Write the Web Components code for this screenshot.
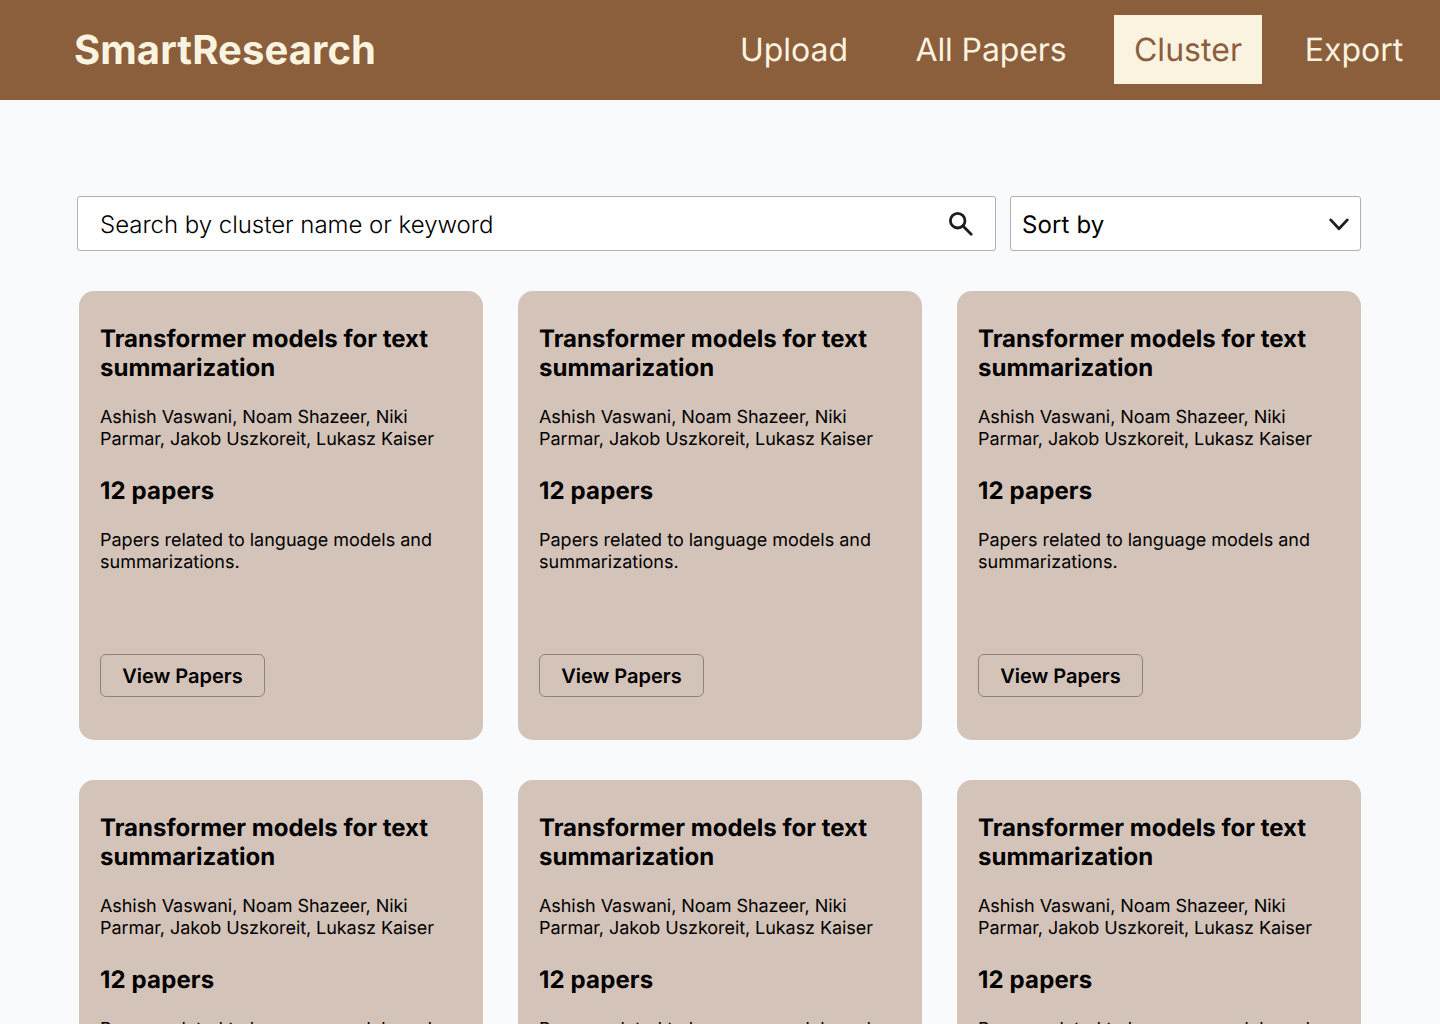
<!DOCTYPE html>
<html lang="en"><head><meta charset="utf-8"><title>SmartResearch</title>
<style>html,body{margin:0;height:1024px;overflow:hidden;background:#f9fafc;font-family:Inter,sans-serif;color:#000;text-rendering:geometricPrecision}</style></head>
<body><cluster-page></cluster-page>
<script>
function define(name, html){
  const t=document.createElement('template');t.innerHTML=html;
  customElements.define(name,class extends HTMLElement{
    constructor(){super();this.attachShadow({mode:'open'}).append(t.content.cloneNode(true));}
  });
}
define('nav-item',`<style>:host{display:flex;align-items:center;justify-content:center;height:69px;box-sizing:border-box;font-size:32px;line-height:39px;color:#faf3e0;white-space:nowrap;font-weight:400}
:host([active]){background:#faf3e0;color:#8b5e3c;letter-spacing:.05px}</style><slot></slot>`);
define('site-header',`<style>:host{display:flex;height:100px;background:#8b5e3c;box-sizing:border-box;padding:0 26px 1px 74px;align-items:center;justify-content:space-between}
b{font-size:40px;font-weight:700;color:#faf3e0;line-height:49px;letter-spacing:.08px}
nav{display:flex}
nav-item:nth-child(1){width:128px;margin-right:58px}nav-item:nth-child(2){width:150px;margin-right:48px;letter-spacing:-.12px}nav-item:nth-child(3){width:148px;margin-right:32px}nav-item:nth-child(4){width:120px}</style>
<b>SmartResearch</b><nav><nav-item>Upload</nav-item><nav-item>All Papers</nav-item><nav-item active>Cluster</nav-item><nav-item>Export</nav-item></nav>`);
define('search-box',`<style>:host{display:flex;box-sizing:border-box;width:919px;height:55px;border:1px solid #b0b0b0;border-radius:3px;background:#fff;padding:0 21px 0 22px;align-items:center;justify-content:space-between;font-size:24px;font-weight:300;letter-spacing:-.03px}span{padding-top:2px}</style><span><slot></slot></span>
<svg width="26" height="26" viewBox="0 0 26 26" fill="none" stroke="#1d1b20" stroke-width="2.8" stroke-linecap="round"><circle cx="9.7" cy="9.7" r="7.3"/><path d="M15 15L23.2 23.2"/></svg>`);
define('sort-select',`<style>:host{display:flex;box-sizing:border-box;width:351px;height:55px;border:1px solid #b0b0b0;border-radius:3px;background:#fff;padding:0 11px;align-items:center;justify-content:space-between;font-size:24px;letter-spacing:.12px}span{padding-top:2px}</style><span><slot></slot></span>
<svg width="20" height="14" viewBox="0 0 20 14" fill="none" stroke="#1e1e1e" stroke-width="2.8" stroke-linecap="round" stroke-linejoin="round"><path d="M1.7 2.9L10 11.7L18.3 2.9"/></svg>`);
define('cluster-card',`<style>:host{display:flex;flex-direction:column;align-items:flex-start;box-sizing:border-box;width:404px;height:449px;border-radius:15px;background:#d4c3b8;padding:33px 21px 43px}
h2{margin:0;font-size:24px;line-height:29px;font-weight:700}.count{letter-spacing:.14px}p{margin:25px 0;font-size:18px;line-height:22px}.authors{letter-spacing:-.065px}
button{margin:auto 0 0;width:165px;height:43px;box-sizing:border-box;border:1px solid #8d8478;border-radius:6px;background:none;padding:0;font:600 20px Inter,sans-serif;color:#000;text-rendering:inherit}</style>
<h2>Transformer models for text<br>summarization</h2><p class="authors">Ashish Vaswani, Noam Shazeer, Niki<br>Parmar, Jakob Uszkoreit, Lukasz Kaiser</p><h2 class="count">12 papers</h2><p>Papers related to language models and<br>summarizations.</p><button>View Papers</button>`);
define('cluster-page',`<style>:host{display:block}.bar{display:flex;gap:14px;padding:96px 0 0 77px}.grid{display:grid;grid-template-columns:repeat(3,404px);gap:40px 35px;padding:40px 0 0 79px}</style>
<site-header></site-header><div class="bar"><search-box>Search by cluster name or keyword</search-box><sort-select>Sort by</sort-select></div>
<div class="grid">${'<cluster-card></cluster-card>'.repeat(6)}</div>`);
</script></body></html>
